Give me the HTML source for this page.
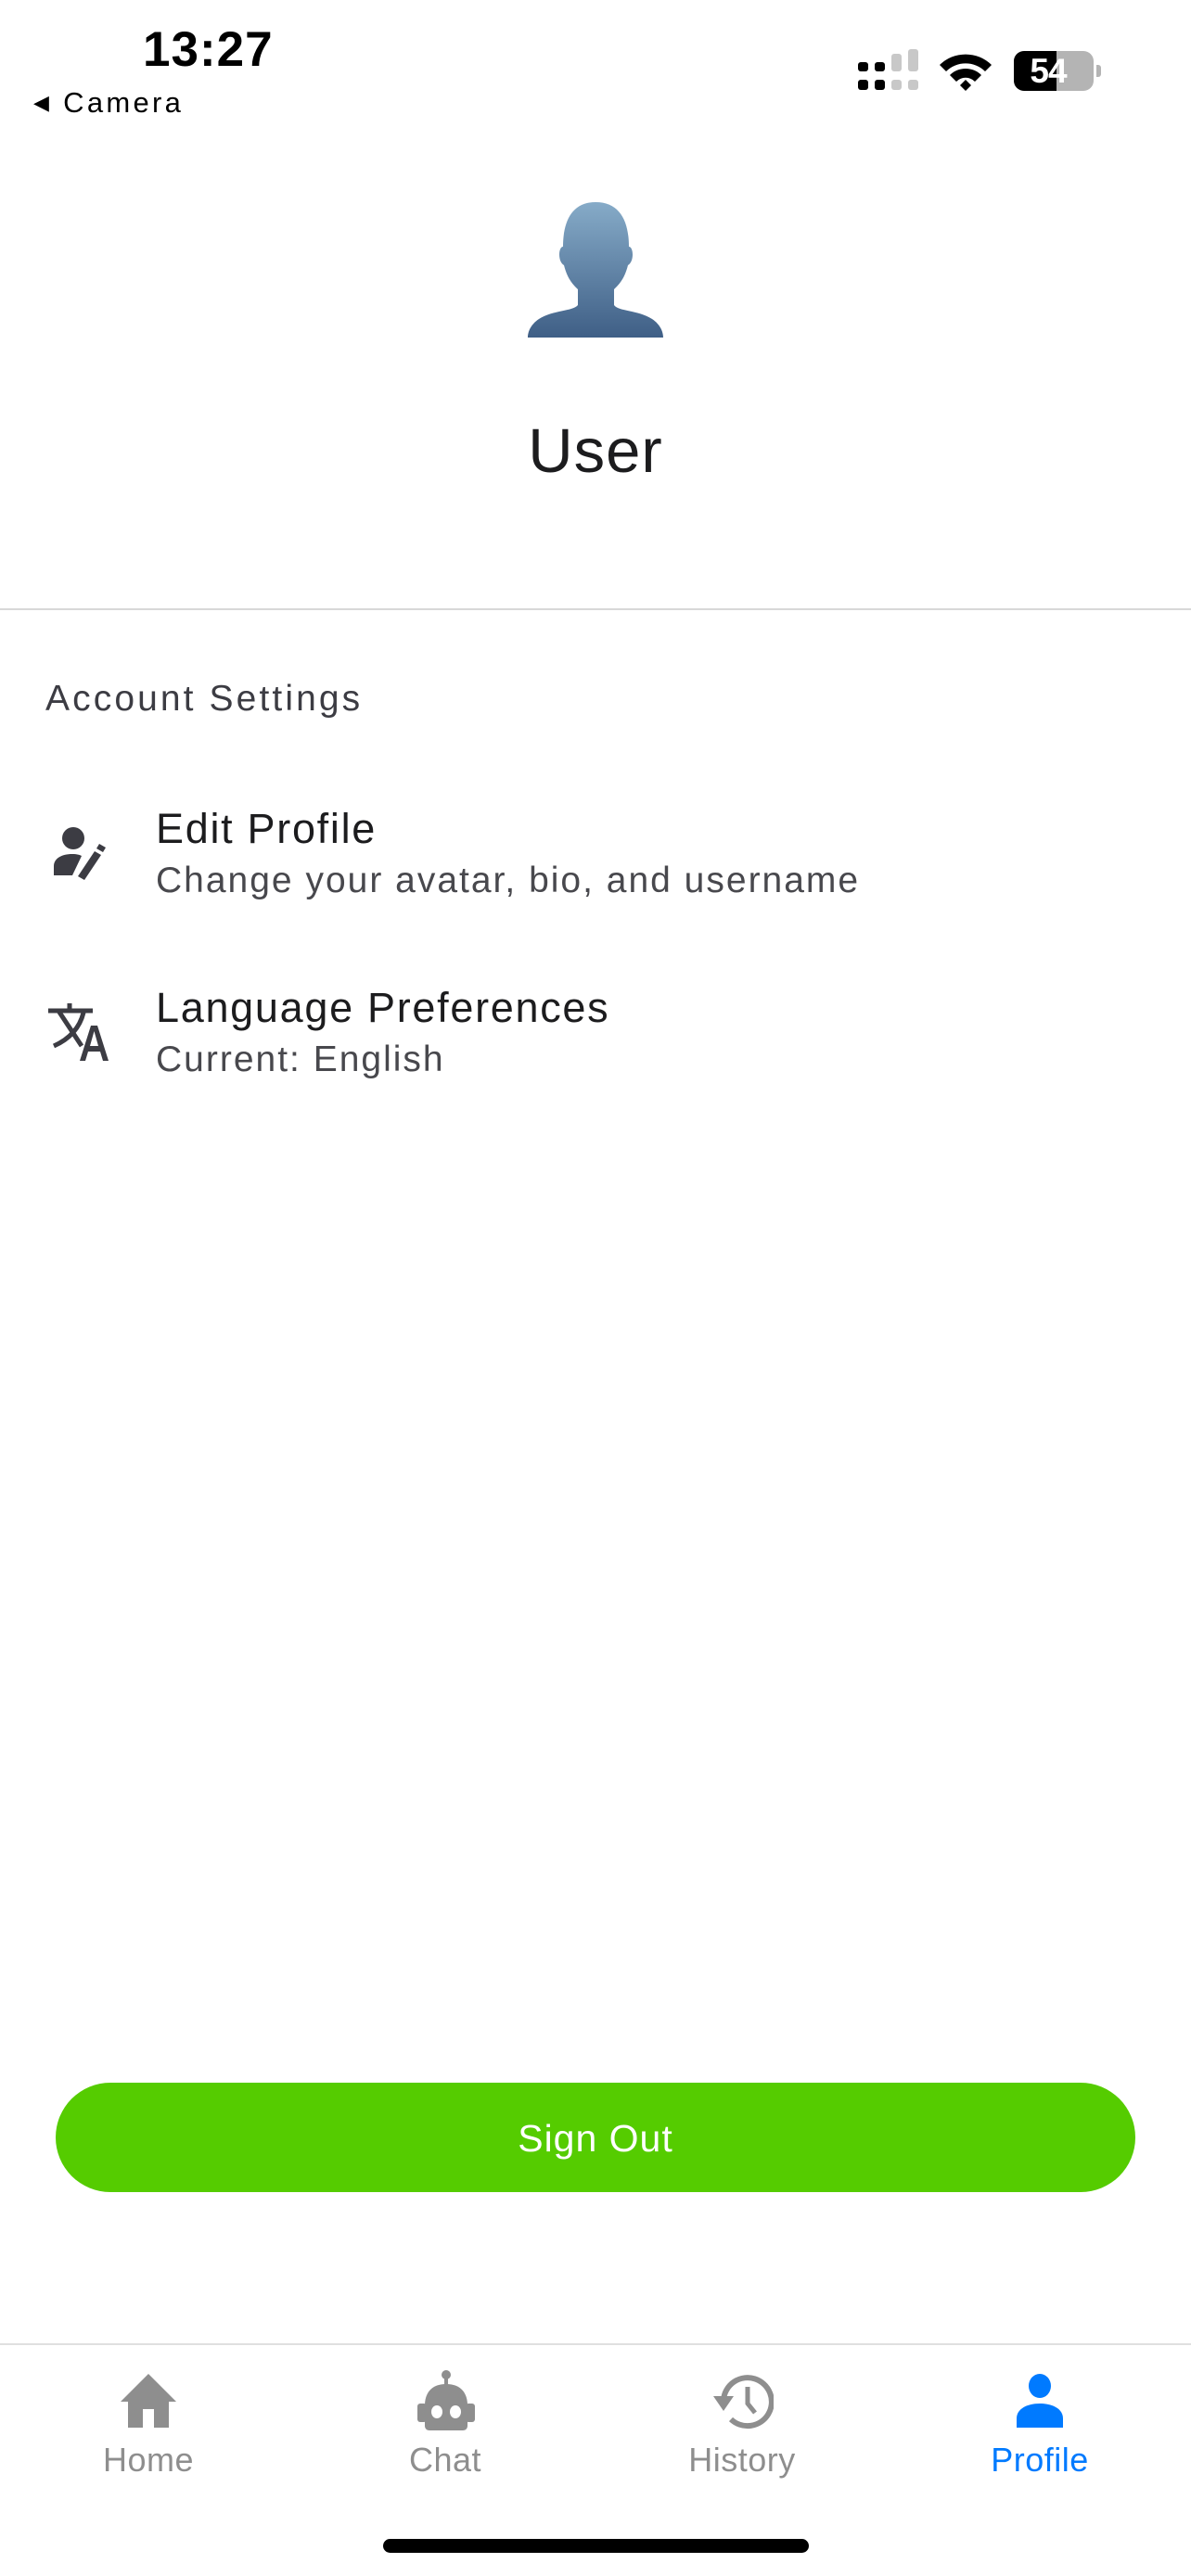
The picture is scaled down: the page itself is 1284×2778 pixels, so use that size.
<!DOCTYPE html>
<html><head><meta charset="utf-8"><style>
*{margin:0;padding:0;box-sizing:border-box}
body{width:1284px;height:2778px;background:#fff;position:relative;overflow:hidden;font-family:"Liberation Sans",sans-serif}
.a{position:absolute}
</style></head><body>
<div class="a" style="left:154px;top:23px;font-size:53px;font-weight:bold;color:#000;letter-spacing:1px">13:27</div>
<div class="a" style="left:36px;top:93px;font-size:31px;color:#000;letter-spacing:3.3px"><span style="font-size:22px;position:relative;top:-3px">◀</span> Camera</div>
<svg class="a" style="left:920px;top:50px" width="75" height="50">
<rect x="5" y="17" width="11" height="10" rx="3" fill="#000"/><rect x="5" y="36" width="11" height="11" rx="3" fill="#000"/>
<rect x="23" y="17" width="11" height="10" rx="3" fill="#000"/><rect x="23" y="36" width="11" height="11" rx="3" fill="#000"/>
<rect x="41" y="8" width="11" height="19" rx="3" fill="#c8c8c8"/><rect x="41" y="36" width="11" height="11" rx="3" fill="#c8c8c8"/>
<rect x="59" y="3" width="11" height="24" rx="3" fill="#c8c8c8"/><rect x="59" y="36" width="11" height="11" rx="3" fill="#c8c8c8"/>
</svg>
<svg class="a" style="left:1010px;top:54px" width="62" height="44" viewBox="0 0 62 44">
<path d="M3 16 A40 40 0 0 1 59 16 L52 23 A30 30 0 0 0 10 23Z" fill="#000"/>
<path d="M14 27 A24 24 0 0 1 48 27 L41 34 A14 14 0 0 0 21 34Z" fill="#000"/>
<path d="M25 38 L31 32 L37 38 L31 44Z" fill="#000"/>
</svg>
<div class="a" style="left:1093px;top:55px;width:86px;height:43px;border-radius:11px;background:#b4b4b4;overflow:hidden">
<div style="width:46px;height:43px;background:#000"></div>
<div class="a" style="left:0;top:0;width:86px;text-align:center;line-height:43px;font-size:37px;font-weight:bold;color:#fff;letter-spacing:-1px;margin-left:-6px">54</div>
</div>
<div class="a" style="left:1182px;top:70px;width:5px;height:13px;border-radius:0 3px 3px 0;background:#b4b4b4"></div>

<svg class="a" style="left:567px;top:216px" width="150" height="150" viewBox="0 0 150 150">
<defs><linearGradient id="g" x1="0" y1="0" x2="0" y2="1"><stop offset="0" stop-color="#86abc8"/><stop offset="1" stop-color="#3f5f86"/></linearGradient></defs>
<path d="M75 2 C50 2 40 22 40 50 C35 50 34 66 41 70 C45 86 52 92 56 96 L56 113 C50 120 30 118 14 128 C5 134 2 142 2 148 L148 148 C148 142 145 134 136 128 C120 118 100 120 95 113 L95 96 C99 92 106 86 110 70 C117 66 116 50 111 50 C111 22 101 2 75 2Z" fill="url(#g)"/>
</svg>
<div class="a" style="left:0;width:1284px;top:448px;text-align:center;font-size:67px;color:#1c1c1e;letter-spacing:1px">User</div>
<div class="a" style="left:0;top:656px;width:1284px;height:2px;background:#d8d8d8"></div>

<div class="a" style="left:49px;top:732px;font-size:39px;color:#3c3c43;letter-spacing:3.1px">Account Settings</div>

<svg class="a" style="left:52px;top:888px" width="66" height="62" viewBox="0 0 66 62">
<circle cx="27" cy="16" r="12" fill="#3c3c43"/>
<path d="M6 56 L6 46 C6 38 14 33 26 33 C31 33 34 34 36 35 L26 56Z" fill="#3c3c43"/>
<path d="M32 57 L50 30 L57 34 L39 61Z" fill="#3c3c43"/>
<path d="M52 27 L55 22 L62 26 L59 31Z" fill="#3c3c43"/>
</svg>
<div class="a" style="left:168px;top:868px;font-size:45px;color:#1c1c1e;letter-spacing:1.7px">Edit Profile</div>
<div class="a" style="left:168px;top:928px;font-size:39px;color:#48484d;letter-spacing:2.0px">Change your avatar, bio, and username</div>

<svg class="a" style="left:50px;top:1078px" width="70" height="68" viewBox="0 0 70 68">
<path d="M2 12 H50 M25 4 V12 M13 12 L38 50 M40 14 C36 30 26 42 8 50" stroke="#3c3c43" stroke-width="5" fill="none"/>
<path d="M36 66 L48 28 H55 L67 66 H61 L58 56 H45 L42 66Z M47 50 H56 L51.5 34Z" fill="#3c3c43"/>
</svg>
<div class="a" style="left:168px;top:1061px;font-size:45px;color:#1c1c1e;letter-spacing:1.7px">Language Preferences</div>
<div class="a" style="left:168px;top:1121px;font-size:39px;color:#48484d;letter-spacing:2.0px">Current: English</div>

<div class="a" style="left:60px;top:2246px;width:1164px;height:118px;border-radius:59px;background:#55cc00;color:#fff;font-size:41px;text-align:center;line-height:120px;letter-spacing:1px">Sign Out</div>

<div class="a" style="left:0;top:2527px;width:1284px;height:2px;background:#e0e0e0"></div>
<svg class="a" style="left:128px;top:2558px" width="64" height="62" viewBox="0 0 64 62">
<path d="M32 2 L62 32 H54 V60 H38 V40 H26 V60 H10 V32 H2Z" fill="#8e8e8e"/>
</svg>
<svg class="a" style="left:446px;top:2554px" width="70" height="68" viewBox="0 0 70 68">
<circle cx="35" cy="7" r="5" fill="#8e8e8e"/><rect x="33" y="10" width="4" height="8" fill="#8e8e8e"/>
<path d="M35 17 C18 17 12 28 12 40 V62 C12 65 14 67 17 67 H53 C56 67 58 65 58 62 V40 C58 28 52 17 35 17Z" fill="#8e8e8e"/>
<rect x="4" y="38" width="10" height="20" rx="3" fill="#8e8e8e"/><rect x="56" y="38" width="10" height="20" rx="3" fill="#8e8e8e"/>
<ellipse cx="25" cy="47" rx="6" ry="7" fill="#fff"/><ellipse cx="45" cy="47" rx="6" ry="7" fill="#fff"/>
</svg>
<svg class="a" style="left:766px;top:2556px" width="68" height="66" viewBox="0 0 68 66">
<path d="M14 32 A26 26 0 1 1 22 53" stroke="#8e8e8e" stroke-width="6" fill="none"/>
<path d="M3 28 H25 L14 44Z" fill="#8e8e8e"/>
<path d="M40 18 V36 L48 46" stroke="#8e8e8e" stroke-width="5" fill="none"/>
</svg>
<svg class="a" style="left:1093px;top:2560px" width="56" height="58" viewBox="0 0 56 58">
<ellipse cx="28" cy="13" rx="12" ry="13" fill="#007aff"/>
<path d="M3 58 V48 C3 38 14 32 28 32 C42 32 53 38 53 48 V58Z" fill="#007aff"/>
</svg>
<div class="a" style="left:60px;width:200px;top:2632px;text-align:center;font-size:36px;color:#8e8e8e;letter-spacing:0.5px">Home</div>
<div class="a" style="left:380px;width:200px;top:2632px;text-align:center;font-size:36px;color:#8e8e8e;letter-spacing:0.5px">Chat</div>
<div class="a" style="left:700px;width:200px;top:2632px;text-align:center;font-size:36px;color:#8e8e8e;letter-spacing:0.5px">History</div>
<div class="a" style="left:1021px;width:200px;top:2632px;text-align:center;font-size:36px;color:#007aff;letter-spacing:0.5px">Profile</div>
<div class="a" style="left:413px;top:2738px;width:459px;height:15px;border-radius:8px;background:#000"></div>
</body></html>
